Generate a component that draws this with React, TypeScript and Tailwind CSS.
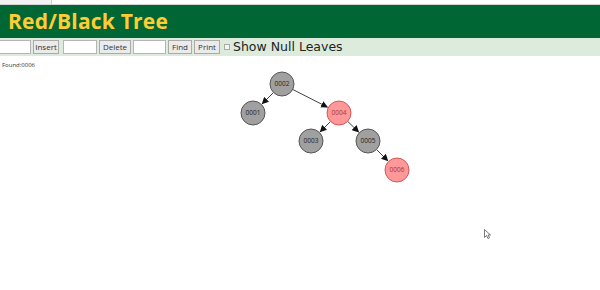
const nodes = [
  { id: '0002', x: 282, y: 84, red: false },
  { id: '0001', x: 253, y: 113, red: false },
  { id: '0004', x: 339, y: 113, red: true },
  { id: '0003', x: 311, y: 141, red: false },
  { id: '0005', x: 368, y: 141, red: false },
  { id: '0006', x: 397, y: 170, red: true },
];

const edges: [number, number][] = [
  [0, 1],
  [0, 2],
  [2, 3],
  [2, 4],
  [4, 5],
];

const R = 12;

function Edge({ a, b }: { a: (typeof nodes)[0]; b: (typeof nodes)[0] }) {
  const dx = b.x - a.x;
  const dy = b.y - a.y;
  const len = Math.sqrt(dx * dx + dy * dy);
  const ux = dx / len;
  const uy = dy / len;
  const x1 = a.x + ux * R;
  const y1 = a.y + uy * R;
  const x2 = b.x - ux * (R + 1);
  const y2 = b.y - uy * (R + 1);
  return <line x1={x1} y1={y1} x2={x2} y2={y2} stroke="#444" strokeWidth={1} markerEnd="url(#arrow)" />;
}

export default function App() {
  return (
    <div className="relative w-[600px] h-[290px] bg-white overflow-hidden" style={{ fontFamily: '"Open Sans", "DejaVu Sans", sans-serif' }}>
      {/* browser chrome remnant */}
      <div className="h-[5px] flex bg-[#f2f2f2] border-b border-[#d4d4d4]">
        <div className="w-[52px] border-r border-[#cfcfcf]" />
        <div className="flex-1 bg-white" />
      </div>

      {/* header */}
      <div className="h-[33px] bg-[#006633] flex items-center pl-[8px]">
        <h1 className="text-[#ffcc33] text-[21px] font-bold leading-none tracking-[0.2px]">Red/Black Tree</h1>
      </div>

      {/* toolbar */}
      <div className="h-[18px] bg-[#dcebdc] flex items-center">
        <input className="w-[31px] h-[14px] bg-white border border-[#b5b5b5] border-l-0" />
        <button className="w-[26px] h-[14px] ml-[2px] bg-[#ebebeb] border border-[#aaa] text-[8px] leading-none text-[#333]">Insert</button>
        <input className="w-[34px] h-[14px] ml-[4px] bg-white border border-[#b5b5b5]" />
        <button className="w-[32px] h-[14px] ml-[2px] bg-[#ebebeb] border border-[#aaa] text-[8px] leading-none text-[#333]">Delete</button>
        <input className="w-[33px] h-[14px] ml-[2px] bg-white border border-[#b5b5b5]" />
        <button className="w-[24px] h-[14px] ml-[2px] bg-[#ebebeb] border border-[#aaa] text-[8px] leading-none text-[#333]">Find</button>
        <button className="w-[26px] h-[14px] ml-[2px] bg-[#ebebeb] border border-[#aaa] text-[8px] leading-none text-[#333]">Print</button>
        <span className="ml-[4px] w-[6px] h-[6px] border border-[#aaa] bg-[#f5f5f5]" />
        <span className="ml-[3px] text-[12.5px] text-[#222]" style={{ fontFamily: '"DejaVu Sans", sans-serif' }}>Show Null Leaves</span>
      </div>

      <div className="pl-[2px] pt-[5px] text-[6px] text-[#333]">Found:0006</div>

      {/* tree canvas */}
      <svg className="absolute left-0 top-0" width={600} height={290}>
        <defs>
          <marker id="arrow" viewBox="0 0 10 10" refX="9" refY="5" markerWidth="7" markerHeight="7" orient="auto">
            <path d="M0 0 L10 5 L0 10 z" fill="#111" />
          </marker>
        </defs>
        {edges.map(([i, j]) => (
          <Edge key={`${i}-${j}`} a={nodes[i]} b={nodes[j]} />
        ))}
        {nodes.map((n) => (
          <g key={n.id}>
            <circle cx={n.x} cy={n.y} r={R} fill={n.red ? '#ff9999' : '#a0a0a0'} stroke={n.red ? '#d95555' : '#555'} strokeWidth={1} />
            <text x={n.x} y={n.y + 2} textAnchor="middle" fontSize={6.5} fill={n.red ? '#a33' : '#222'} fontFamily='"Open Sans", sans-serif'>
              {n.id}
            </text>
          </g>
        ))}
        {/* mouse cursor */}
        <path d="M484.5 229.5 L484.5 237.5 L486.5 235.5 L488 238.5 L489.5 237.8 L488 235 L490.5 235 Z" fill="#fff" stroke="#555" strokeWidth={0.8} />
      </svg>
    </div>
  );
}
